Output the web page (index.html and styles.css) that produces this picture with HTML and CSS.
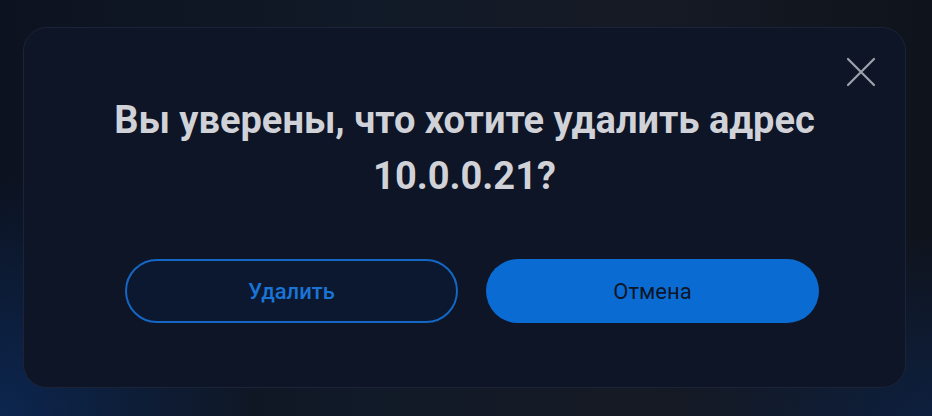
FILE: index.html
```html
<!DOCTYPE html>
<html lang="ru">
<head>
<meta charset="UTF-8">
<meta name="viewport" content="width=device-width, initial-scale=1.0">
<title>Удалить адрес</title>
<link rel="stylesheet" href="styles.css">
</head>
<body>
<div class="modal">
  <button class="close" aria-label="Закрыть">
    <svg width="30" height="30" viewBox="0 0 30 30">
      <path d="M2 2 L28 28 M28 2 L2 28" stroke="#9ea3ab" stroke-width="2.2" stroke-linecap="round" fill="none"/>
    </svg>
  </button>
  <div class="title">Вы уверены, что хотите удалить адрес 10.0.0.21?</div>
  <div class="actions">
    <button class="btn btn-outline">Удалить</button>
    <button class="btn btn-primary">Отмена</button>
  </div>
</div>
</body>
</html>
```

FILE: styles.css
```css
body {
  margin: 0;
  padding: 27px 26px 28px 23px;
  font-family: Roboto, "Noto Sans", sans-serif;
  background-color: #0f1420;
  background-image:
    radial-gradient(ellipse 360px 340px at 0% 100%, rgba(12, 45, 95, 0.75), transparent 70%),
    radial-gradient(ellipse 380px 260px at 100% 100%, rgba(12, 40, 85, 0.6), transparent 70%),
    linear-gradient(90deg, #0c1220 0%, #111a28 40%, #161a24 70%, #0f131c 100%);
  height: 416px;
  box-sizing: border-box;
  overflow: hidden;
}
.modal {
  position: relative;
  height: 361px;
  box-sizing: border-box;
  background-color: #0d1527;
  border: 1px solid #1a2338;
  border-radius: 24px;
  padding: 64px 40px 0 40px;
}
.close {
  position: absolute;
  top: 29px;
  right: 29px;
  background: none;
  border: none;
  padding: 0;
  cursor: pointer;
  line-height: 0;
}
.title {
  text-align: center;
  color: #d0d2d8;
  font-size: 38px;
  font-weight: 700;
  line-height: 56px;
  padding: 0 40px;
}
.actions {
  display: flex;
  justify-content: center;
  gap: 28px;
  margin-top: 55px;
  padding-left: 15px;
}
.btn {
  width: 333px;
  height: 64px;
  border-radius: 32px;
  font-family: Roboto, "Noto Sans", sans-serif;
  font-size: 22px;
  cursor: pointer;
}
.btn-outline {
  background-color: #0b1830;
  border: 2px solid #1467c4;
  color: #1a74d6;
  font-weight: 500;
}
.btn-primary {
  background-color: #0a6cd3;
  border: none;
  color: #0d1527;
  font-weight: 400;
}
```
